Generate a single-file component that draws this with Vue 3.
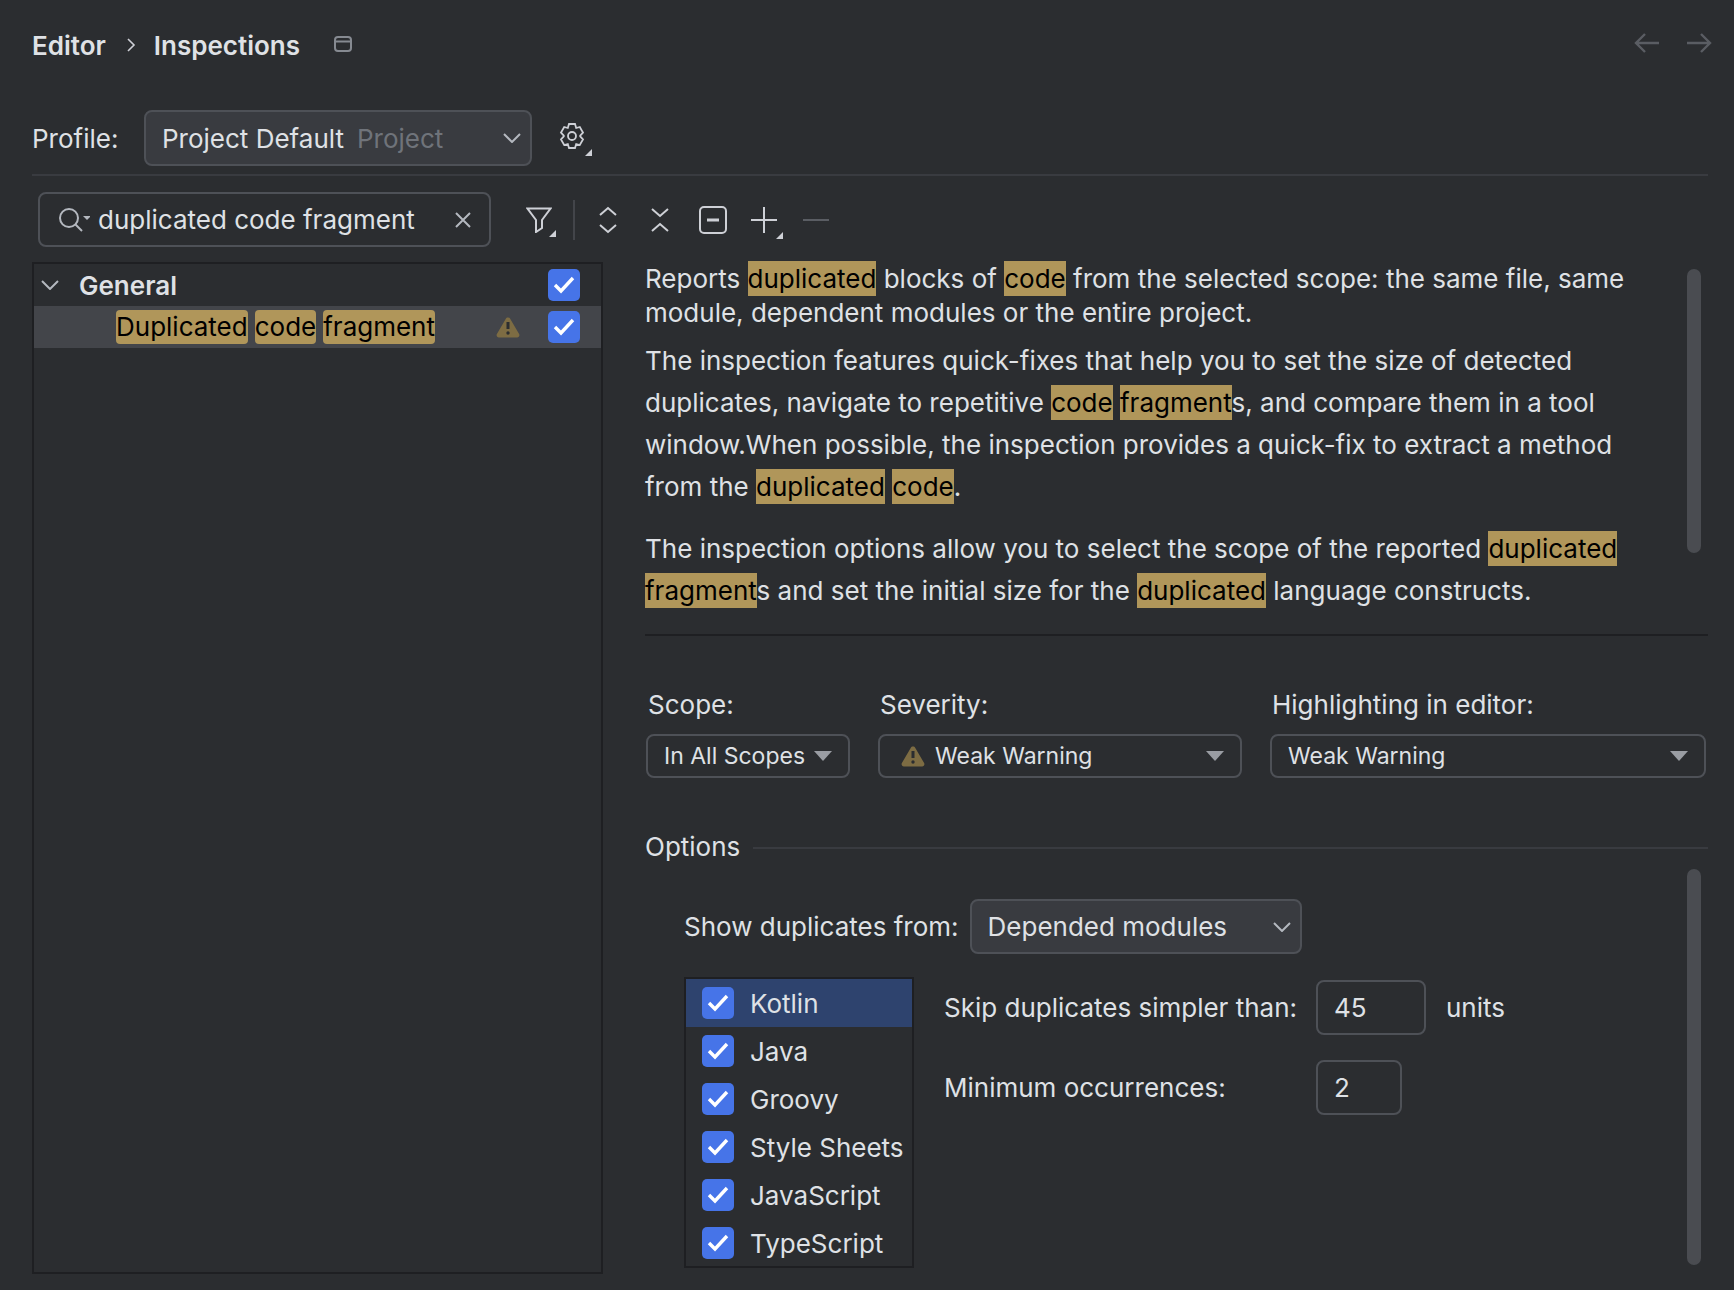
<template>
  <div class="page">
    <header class="crumbs">
      <span class="crumb">Editor</span>
      <svg class="crumb-sep" width="10" height="18" viewBox="0 0 10 18"><path d="M2 3l6 6-6 6" /></svg>
      <span class="crumb">Inspections</span>
      <svg class="win-icon" width="18" height="16" viewBox="0 0 18 16"><rect x="1" y="1" width="16" height="14" rx="3" /><path d="M1 5.5h16" /></svg>
      <div class="nav-arrows">
        <svg width="26" height="22" viewBox="0 0 26 22"><path d="M25 11H2M11 2l-9 9 9 9" /></svg>
        <svg width="26" height="22" viewBox="0 0 26 22"><path d="M1 11h23M15 2l9 9-9 9" /></svg>
      </div>
    </header>

    <div class="profile-row">
      <span class="profile-label">Profile:</span>
      <div class="combo profile-combo">
        <span>Project Default</span>
        <span class="muted">Project</span>
        <svg class="chev" width="18" height="10" viewBox="0 0 18 10"><path d="M1 1l8 8 8-8" /></svg>
      </div>
      <div class="gear-wrap">
        <svg width="28" height="30" viewBox="0 0 28 30"><path d="M11 2h6l1.2 4 3.6-1 3.2 5.6-2.8 3 0 .8 2.8 3-3.2 5.6-3.6-1L17 26h-6l-1.2-4-3.6 1L3 17.400l2.800-3V13.600L3 10.600 6.200 5l3.600 1z" /><circle cx="14" cy="14" r="4" /></svg>
        <i class="corner"></i>
      </div>
    </div>
    <div class="rule"></div>

    <div class="toolbar">
      <div class="search">
        <svg width="32" height="28" viewBox="0 0 32 28"><circle cx="11" cy="12" r="9" /><path d="M17.500 18.500L24 25" /><path class="fill" d="M25 10h8l-4 4z" /></svg>
        <span class="search-text">duplicated code fragment</span>
        <svg class="clear" width="16" height="16" viewBox="0 0 16 16"><path d="M1 1l14 14M15 1L1 15" /></svg>
      </div>
      <div class="tools">
        <div class="tool tool-filter">
          <svg width="26" height="26" viewBox="0 0 26 26"><path d="M1.500 1.500h23L16 13v8l-6 4V13z" /></svg>
          <i class="corner"></i>
        </div>
        <span class="tool-sep"></span>
        <svg class="tool-updown" width="18" height="28" viewBox="0 0 18 28"><path d="M1 9l8-7 8 7M1 19l8 7 8-7" /></svg>
        <svg class="tool-collapse" width="18" height="26" viewBox="0 0 18 26"><path d="M1 2l8 7 8-7M1 24l8-7 8 7" /></svg>
        <svg class="tool-box" width="28" height="28" viewBox="0 0 28 28"><rect x="1" y="1" width="26" height="26" rx="4" /><path class="thick" d="M8 14h12" /></svg>
        <div class="tool tool-plus">
          <svg width="26" height="26" viewBox="0 0 26 26"><path d="M0 13h26M13 0v26" /></svg>
          <i class="corner"></i>
        </div>
        <svg class="tool-minus" width="26" height="4" viewBox="0 0 26 4"><path d="M0 2h26" /></svg>
      </div>
    </div>

    <div class="body">
      <div class="tree">
        <div class="tree-row group-row">
          <svg class="tree-chev" width="18" height="10" viewBox="0 0 18 10"><path d="M1 1l8 8 8-8" /></svg>
          <span class="group-name">General</span>
          <span class="check">
            <svg width="22" height="18" viewBox="0 0 22 18"><path d="M2 9l6 6L20 2" /></svg>
          </span>
        </div>
        <div class="tree-row item-row">
          <span class="tag">Duplicated</span>
          <span class="tag">code</span>
          <span class="tag">fragment</span>
          <svg class="warn warn-tree" width="24" height="22" viewBox="0 0 24 22"><path class="tri" d="M12 1.500c1 0 1.800.5 2.300 1.400l8.800 15.200c.9 1.600-.2 3.400-2 3.400H2.900c-1.800 0-2.900-1.800-2-3.400L9.700 2.900C10.200 2 11 1.500 12 1.500z" /><path class="mark" d="M12 6v7" /><circle class="dot" cx="12" cy="17" r="1.700" /></svg>
          <span class="check">
            <svg width="22" height="18" viewBox="0 0 22 18"><path d="M2 9l6 6L20 2" /></svg>
          </span>
        </div>
      </div>

      <div class="details">
        <div class="desc">
          <p class="p1">Reports <mark>duplicated</mark> blocks of <mark>code</mark> from the selected scope: the same file, same<br>module, dependent modules or the entire project.</p>
          <p class="p2">The inspection features quick-fixes that help you to set the size of detected<br>duplicates, navigate to repetitive <mark>code</mark> <mark>fragment</mark>s, and compare them in a tool<br>window.When possible, the inspection provides a quick-fix to extract a method<br>from the <mark>duplicated</mark> <mark>code</mark>.</p>
          <p class="p3">The inspection options allow you to select the scope of the reported <mark>duplicated</mark><br><mark>fragment</mark>s and set the initial size for the <mark>duplicated</mark> language constructs.</p>
          <span class="bar bar-top"></span>
        </div>
        <div class="divider"></div>

        <div class="selects">
          <div class="field f-scope">
            <label>Scope:</label>
            <div class="drop">In All Scopes<i class="tri-down"></i></div>
          </div>
          <div class="field f-severity">
            <label>Severity:</label>
            <div class="drop">
              <svg class="warn" width="24" height="22" viewBox="0 0 24 22"><path class="tri" d="M12 1.500c1 0 1.800.5 2.300 1.400l8.800 15.200c.9 1.600-.2 3.400-2 3.400H2.900c-1.800 0-2.900-1.800-2-3.400L9.700 2.900C10.200 2 11 1.500 12 1.500z" /><path class="mark" d="M12 6v7" /><circle class="dot" cx="12" cy="17" r="1.700" /></svg>
              Weak Warning<i class="tri-down"></i>
            </div>
          </div>
          <div class="field f-high">
            <label>Highlighting in editor:</label>
            <div class="drop">Weak Warning<i class="tri-down"></i></div>
          </div>
        </div>

        <div class="options-title"><span>Options</span><div class="options-line"></div></div>

        <div class="options">
          <span class="bar bar-bottom"></span>
          <div class="show-row">
            <span>Show duplicates from:</span>
            <div class="combo dep-combo">
              <span>Depended modules</span>
              <svg class="chev" width="18" height="10" viewBox="0 0 18 10"><path d="M1 1l8 8 8-8" /></svg>
            </div>
          </div>
          <div class="lang-row">
            <ul class="langs">
              <li v-for="(lang, i) in languages" :key="lang" :class="{ active: i === 0 }">
                <span class="check">
                  <svg width="22" height="18" viewBox="0 0 22 18"><path d="M2 9l6 6L20 2" /></svg>
                </span>
                {{ lang }}
              </li>
            </ul>
            <div class="limits">
              <div class="limit-row">
                <span class="limit-label">Skip duplicates simpler than:</span>
                <div class="num num-wide">45</div>
                <span class="units">units</span>
              </div>
              <div class="limit-row">
                <span class="limit-label">Minimum occurrences:</span>
                <div class="num">2</div>
              </div>
            </div>
          </div>
        </div>
      </div>
    </div>
  </div>
</template>

<script setup>
const languages = ['Kotlin', 'Java', 'Groovy', 'Style Sheets', 'JavaScript', 'TypeScript']
</script>

<style>
html, body { background: #2b2d30; }
</style>

<style scoped>
.page {
  width: 1734px;
  height: 1290px;
  box-sizing: border-box;
  padding: 0 26px 0 32px;
  background: #2b2d30;
  color: #dfe1e5;
  font-family: Inter, "Liberation Sans", sans-serif;
  font-size: 26px;
  overflow: hidden;
}

svg { fill: none; stroke: #ced0d6; stroke-width: 2; flex: none; }

/* breadcrumbs */
.crumbs { height: 90px; display: flex; align-items: center; }
.crumb { font-weight: 600; }
.crumb-sep { margin: 0 18px 0 20px; }
.crumb-sep path { stroke-width: 1.600; }
.win-icon { margin-left: 34px; margin-top: -2px; stroke: #868a91; }
.nav-arrows { margin-left: auto; display: flex; gap: 26px; margin-top: -4px; margin-right: -4px; }
.nav-arrows svg { stroke: #5a5d63; stroke-width: 2.400; }

/* profile */
.profile-row { display: flex; align-items: center; height: 56px; margin-top: 20px; }
.profile-label { width: 112px; }
.combo {
  box-sizing: border-box;
  display: flex;
  align-items: center;
  height: 100%;
  background: #393b40;
  border: 2px solid #4e5157;
  border-radius: 8px;
}
.profile-combo { width: 388px; padding-left: 16px; gap: 13px; }
.muted { color: #6f737a; }
.chev { margin-left: auto; margin-right: 9px; stroke: #b4b8bf; }
.gear-wrap { position: relative; width: 32px; height: 32px; margin-left: 26px; }
.gear-wrap svg { stroke-width: 1.800; }
.corner {
  position: absolute;
  right: -2px;
  bottom: -2px;
  width: 0;
  height: 0;
  border-left: 7px solid transparent;
  border-bottom: 7px solid #ced0d6;
}
.rule { height: 2px; margin-top: 8px; background: #393b40; }

/* toolbar */
.toolbar { display: flex; align-items: center; height: 55px; margin-top: 16px; padding-left: 6px; }
.search {
  box-sizing: border-box;
  width: 453px;
  height: 100%;
  display: flex;
  align-items: center;
  padding: 0 18px;
  border: 2px solid #4e5157;
  border-radius: 8px;
}
.search svg { stroke: #b4b8bf; }
.search .fill { fill: #b4b8bf; stroke: none; }
.search-text { margin-left: 8px; }
.clear { margin-left: auto; stroke: #868a91; }
.tools { display: flex; align-items: center; margin-left: 35px; }
.tool { position: relative; display: flex; }
.tool-sep { width: 2px; height: 40px; background: #43454a; margin: 0 24px 0 21px; }
.tool-collapse { margin-left: 34px; }
.tool-box { margin-left: 30px; }
.tool-box .thick { stroke-width: 3; }
.tool-plus { margin-left: 24px; }
.tool-plus .corner { right: -6px; bottom: -6px; }
.tool-filter .corner { right: -4px; bottom: -4px; }
.tool-minus { margin-left: 26px; stroke: #5a5d63; }

/* tree */
.body { display: grid; grid-template-columns: 571px 1fr; column-gap: 42px; margin-top: 15px; }
.tree { height: 1012px; box-sizing: border-box; border: 2px solid #1e1f22; }
.tree-row { display: flex; align-items: center; }
.group-row { height: 42px; padding-left: 7px; }
.group-name { margin-left: 20px; font-weight: 600; }
.tree-chev { stroke: #b4b8bf; }
.item-row { height: 42px; padding-left: 82px; gap: 7px; background: #43454a; color: #000; }
.tag { background: #b0965a; border-radius: 4px; height: 34px; line-height: 34px; }
.warn { stroke: none; }
.warn .tri { fill: #7d6c43; }
.warn .mark { stroke: #2b2d30; stroke-width: 3; }
.warn .dot { fill: #2b2d30; }
.warn-tree { margin-left: 54px; }
.check {
  display: flex;
  align-items: center;
  justify-content: center;
  width: 32px;
  height: 32px;
  flex: none;
  background: #4674e8;
  border-radius: 5px;
}
.check svg { stroke: #fff; stroke-width: 3.400; }
.tree-row > .check { margin-left: auto; margin-right: 21px; }

/* details */
.details { display: flex; flex-direction: column; }
.desc { position: relative; }
.desc p { margin: 0; }
.p1 { line-height: 34px; }
.p2 { line-height: 42px; margin-top: 10px !important; }
.p3 { line-height: 42px; margin-top: 20px !important; }
mark { background: #b0965a; color: #000; padding: 2px 0; }
.bar {
  position: absolute;
  right: 7px;
  width: 14px;
  background: #4a4c51;
  border-radius: 7px;
}
.bar-top { top: 7px; height: 284px; }
.bar-bottom { top: 0; height: 396px; }
.divider { height: 2px; margin-top: 22px; background: #1e1f22; }

.selects { display: flex; margin-top: 54px; padding-left: 1px; }
.field label { display: block; height: 30px; line-height: 30px; padding-left: 2px; margin-bottom: 14px; }
.f-scope { width: 204px; margin-right: 28px; }
.f-severity { width: 364px; margin-right: 28px; }
.f-high { width: 436px; }
.drop {
  position: relative;
  box-sizing: border-box;
  height: 44px;
  display: flex;
  align-items: center;
  padding-left: 16px;
  font-size: 23px;
  border: 2px solid #4e5157;
  border-radius: 8px;
}
.drop .warn { margin-left: 5px; margin-right: 10px; }
.tri-down {
  margin-left: auto;
  margin-right: 16px;
  width: 0;
  height: 0;
  border-left: 9px solid transparent;
  border-right: 9px solid transparent;
  border-top: 10px solid #9a9da3;
}

.options-title { display: flex; align-items: center; margin-top: 53px; height: 30px; }
.options-line { flex: 1; height: 2px; background: #393b40; margin-left: 13px; margin-top: 4px; }

.options { position: relative; margin-top: 8px; padding-left: 39px; padding-top: 30px; }
.show-row { display: flex; align-items: center; height: 55px; }
.dep-combo { width: 332px; margin-left: 11px; padding-left: 16px; }
.lang-row { display: flex; margin-top: 23px; }
.langs {
  list-style: none;
  margin: 0;
  padding: 0;
  box-sizing: border-box;
  width: 230px;
  height: 291px;
  border: 2px solid #1e1f22;
}
.langs li {
  height: 48px;
  display: flex;
  align-items: center;
  gap: 16px;
  padding-left: 16px;
}
.langs li.active { background: #2e436e; }
.limits { margin-left: 30px; display: flex; flex-direction: column; }
.limit-row { display: flex; align-items: center; height: 55px; margin-top: 3px; margin-bottom: 22px; }
.limit-label { width: 372px; }
.num {
  box-sizing: border-box;
  width: 86px;
  height: 55px;
  line-height: 51px;
  padding-left: 16px;
  border: 2px solid #4e5157;
  border-radius: 8px;
}
.num-wide { width: 110px; }
.units { margin-left: 20px; }
</style>
